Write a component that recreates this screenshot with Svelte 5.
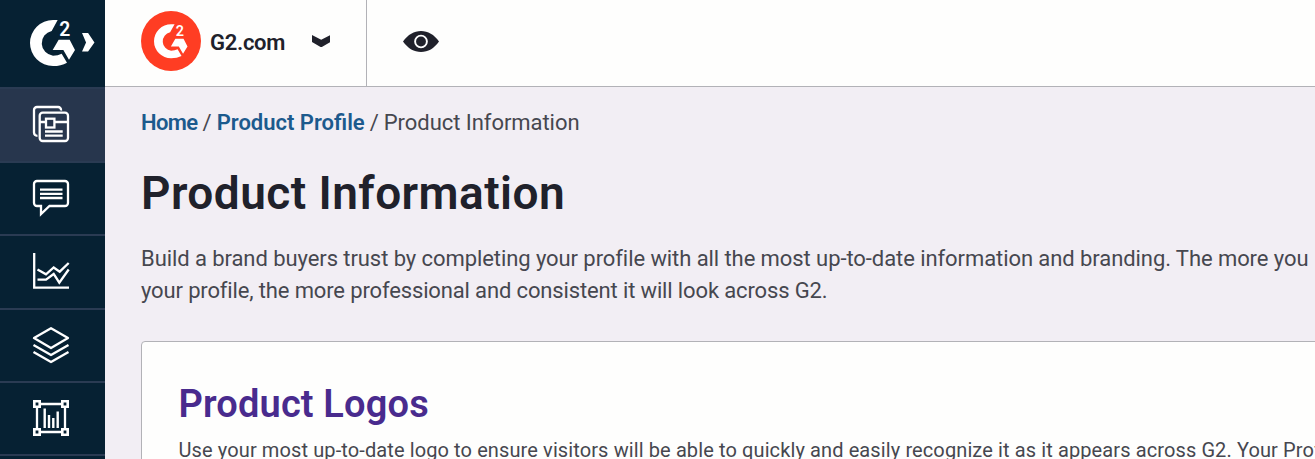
<script>
  const navItems = ['profile', 'reviews', 'analytics', 'layers', 'studio'];
</script>

{#snippet logo(color)}
  <svg class="logo" viewBox="90 58 135 138" fill={color}>
    <path d="M173 58L155 91A37.5 37.5 0 0 0 159 165Q174 165 185 159L201 186Q183 196 159 196A69 69 0 0 1 159 58Z" />
    <path d="M176 117H209L225 148L207 177L190 148H158Z" />
    <text x="178" y="107" class="two">2</text>
  </svg>
{/snippet}

<div class="app">
  <aside>
    <div class="brand">
      {@render logo('#fff')}
      <svg class="expand" viewBox="0 0 37 55"><path d="M0 0H18L37 28L18 55H0L12 28Z" fill="#fff" /></svg>
    </div>
    <nav>
      {#each navItems as item, i}
        <a href="#{item}" class:active={i === 0} aria-label={item}>
          <svg viewBox="0 0 36 36" fill="none" stroke="#fff" stroke-width="2.3">
            {#if item === 'profile'}
              <path d="M4.5 29.8A3.5 3.5 0 0 1 1 26.5V4A3 3 0 0 1 4 1H25A3 3 0 0 1 28 4.5" />
              <rect x="6.7" y="6.7" width="28.3" height="28.3" rx="3" />
              <path d="M6.7 16H12M22 16H35" />
              <rect x="13" y="12.7" width="8.4" height="8.8" />
              <path d="M12 25.5H29.7M12 29.7H29.7" />
            {:else if item === 'reviews'}
              <path d="M4 1H32A3 3 0 0 1 35 4V23A3 3 0 0 1 32 26H16.5L8 34V26H4A3 3 0 0 1 1 23V4A3 3 0 0 1 4 1Z" />
              <path d="M7 9.7H29.5M7 13.8H29.5M7 18H29.5" />
            {:else if item === 'analytics'}
              <path d="M1.2 0V34.7H36M4.5 16.5L13 21.3L20.7 14.5L26.7 18.7L35.7 10M4.5 26.7H13L20.7 21L26.3 29.7L35.7 16.5" />
            {:else if item === 'layers'}
              <path stroke-linejoin="round" d="M18 1.2L35 11L18 21L1 11ZM.5 18L18 28L35.5 18M.5 25L18 35L35.5 25" />
            {:else}
              <path d="M8 4H28M8 32H28M4 8V28M32 8V28" />
              <path d="M1.3 1.3H6.7V6.7H1.3ZM29.3 1.3H34.7V6.7H29.3ZM1.3 29.3H6.7V34.7H1.3ZM29.3 29.3H34.7V34.7H29.3Z" stroke-width="2.6" />
              <path d="M11.7 8.5V28M16 15V28M20.3 18V28M24.7 11.5V28" stroke-width="2.4" />
            {/if}
          </svg>
        </a>
      {/each}
    </nav>
  </aside>

  <div class="main">
    <header>
      <div class="product">
        <div class="avatar">{@render logo('#fff')}</div>
        <span class="name">G2.com</span>
        <svg class="chev" viewBox="0 0 55 37"><path d="M0 0L27.5 14L55 0V21L27.5 37L0 21Z" fill="#20212b" /></svg>
      </div>
      <svg class="eye" viewBox="0 0 36 21">
        <path d="M0 10.5C5 3.5 11 0 18 0S31 3.5 36 10.5C31 17.5 25 21 18 21S5 17.5 0 10.5Z" fill="#20212b" />
        <circle cx="18" cy="10.5" r="5.9" fill="none" stroke="#fff" stroke-width="1.9" />
      </svg>
    </header>

    <section>
      <div class="crumbs">
        <a href="#home" class="c1">Home</a><span class="sep">/</span><a href="#profile" class="c2">Product Profile</a><span class="sep">/</span><span class="c3">Product Information</span>
      </div>
      <h1>Product Information</h1>
      <p class="intro"><span class="l1">Build a brand buyers trust by completing your profile with all the most up-to-date information and branding. The more you</span><br /><span class="l2">your profile, the more professional and consistent it will look across G2.</span></p>
      <div class="card">
        <h2>Product Logos</h2>
        <p>Use your most up-to-date logo to ensure visitors will be able to quickly and easily recognize it as it appears across G2. Your Profile</p>
      </div>
    </section>
  </div>
</div>

<style>
  .app {
    display: flex;
    width: 100%;
    height: 459px;
    overflow: hidden;
    background: #f2eef4;
    color: #46474f;
    font: 22px/31.5px Roboto, sans-serif;
    white-space: nowrap;
  }
  aside { flex: 0 0 105px; background: #062133; }
  .brand { display: flex; height: 87px; box-sizing: border-box; padding: 19.5px 0 0 30px; gap: 7px; }
  .logo { display: block; flex: none; width: 45px; height: 46px; overflow: visible; }
  .two { font: 600 58px Roboto, sans-serif; }
  .expand { width: 12.5px; height: 18.5px; margin-top: 13.5px; }
  nav a {
    display: flex;
    height: 73.5px;
    box-sizing: border-box;
    padding: 17px 0 0 33px;
    border-top: 2px solid #2a3b53;
  }
  nav a.active { background: #27364d; }
  nav a:last-child { height: 75px; border-bottom: 2px solid #2a3b53; }
  nav svg { width: 36px; height: 36px; overflow: visible; }
  .main { flex: 1; min-width: 0; }
  header { display: flex; height: 87px; box-sizing: border-box; border-bottom: 1.5px solid #b2b2b7; background: #fefefd; }
  .product { display: flex; width: 262px; box-sizing: border-box; padding-left: 36px; border-right: 1.5px solid #b2b2b7; }
  .avatar { width: 60px; height: 60px; margin-top: 11.3px; border-radius: 50%; background: #ff3d23; }
  .avatar .logo { width: 33.5px; height: 34.5px; margin: 12.7px 0 0 13px; }
  .name { width: 102px; margin: 27px 0 0 9px; color: #20212b; font-weight: 600; letter-spacing: -0.3px; }
  .chev { width: 18.4px; height: 12.4px; margin-top: 34.7px; }
  .eye { width: 36px; height: 21px; margin: 31px 0 0 36.3px; }
  section { padding: 20px 0 0 36px; }
  .crumbs a { color: #1c5a8d; font-weight: 600; text-decoration: none; }
  .crumbs .c1 { letter-spacing: -0.6px; }
  .crumbs .c3 { letter-spacing: -0.05px; }
  .sep { margin: 0 5px; }
  h1 { margin: 26px 0 0; color: #20212b; font-size: 46px; line-height: 56px; font-weight: 600; letter-spacing: 0.45px; }
  p { margin: 22px 0 0; }
  .intro { line-height: 32px; }
  .l1 { letter-spacing: -0.075px; }
  .l2 { letter-spacing: -0.14px; }
  .card {
    width: 1300px;
    height: 200px;
    margin-top: 34.5px;
    padding: 37px 0 0 36.5px;
    border: 1.5px solid #b2b2b7;
    border-radius: 4px;
    background: #fefefd;
  }
  h2 { margin: 0; color: #492b8e; font-size: 38px; line-height: 50px; font-weight: 600; letter-spacing: 0.15px; }
  .card p { margin: 6px 0 0; font-size: 20px; letter-spacing: 0.11px; }
</style>
